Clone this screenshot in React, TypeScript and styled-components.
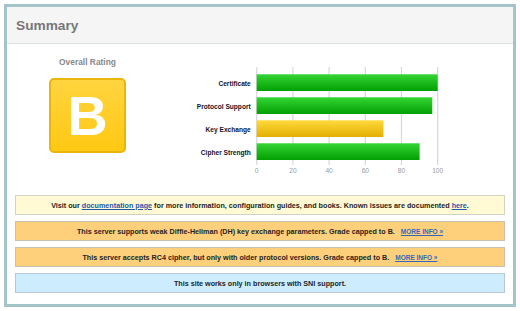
import React from 'react';
import styled, { createGlobalStyle } from 'styled-components';

type Tone = 'info' | 'warning' | 'note';

interface Score {
    label: string;
    value: number;
    color: 'green' | 'yellow';
}

const scores: Score[] = [
    { label: 'Certificate', value: 100, color: 'green' },
    { label: 'Protocol Support', value: 97, color: 'green' },
    { label: 'Key Exchange', value: 70, color: 'yellow' },
    { label: 'Cipher Strength', value: 90, color: 'green' },
];

const GlobalStyle = createGlobalStyle`
    html, body {
        margin: 0;
        background: #fff;
    }
    body {
        padding: 4px;
        font-family: 'Liberation Sans', Arial, sans-serif;
    }
`;

const Frame = styled.div`
    width: 512px;
    box-sizing: border-box;
    border: 3px solid #a5c4c7;
    background: #fff;
`;

const Header = styled.div`
    height: 36px;
    display: flex;
    align-items: center;
    padding-left: 9px;
    background: #f5f5f5;
    border-bottom: 1px solid #d6e4e4;
`;

const Title = styled.h2`
    margin: 0;
    font-size: 13.7px;
    font-weight: bold;
    color: #777;
`;

const Body = styled.div`
    padding: 13px 8px 11px;
`;

const TopRow = styled.div`
    display: flex;
    margin-left: -8px;
`;

const RatingColumn = styled.div`
    width: 161px;
    display: flex;
    flex-direction: column;
    align-items: center;
`;

const RatingLabel = styled.div`
    font-size: 8.4px;
    line-height: 10px;
    font-weight: bold;
    color: #888;
`;

const GradeBox = styled.div`
    margin-top: 11px;
    width: 77px;
    height: 75px;
    box-sizing: border-box;
    border: 2px solid #e9b60c;
    border-radius: 5px;
    background: linear-gradient(#ffd43f, #ffc812);
    display: flex;
    align-items: center;
    justify-content: center;
    color: #fff;
    font-size: 56px;
    line-height: 56px;
    font-weight: bold;
`;

const Notices = styled.div`
    margin-top: 18px;
    display: flex;
    flex-direction: column;
    gap: 6px;
`;

const toneColors: Record<Tone, { bg: string; border: string }> = {
    info: { bg: '#fffad3', border: '#d2d2c4' },
    warning: { bg: '#ffd07c', border: '#c9c2b3' },
    note: { bg: '#cdedff', border: '#b9c9d1' },
};

const Notice = styled.div<{ $tone: Tone }>`
    height: 20px;
    box-sizing: border-box;
    display: flex;
    align-items: center;
    justify-content: center;
    background: ${(p) => toneColors[p.$tone].bg};
    border: 1px solid ${(p) => toneColors[p.$tone].border};
    font-size: 7.2px;
    font-weight: bold;
    color: #1e1e1e;
    white-space: pre;
`;

const Link = styled.a`
    color: #2358ad;
    text-decoration: underline;
`;

const MoreInfo = styled.a`
    margin-left: 6px;
    font-size: 6.5px;
    color: #3568bd;
    text-decoration: underline;
`;

const ScoreChart = () => {
    const x0 = 88.7;
    const unit = 1.81;
    const ticks = [0, 20, 40, 60, 80, 100];

    return (
        <svg
            width='300'
            height='120'
            style={{ fontFamily: "'Liberation Sans', Arial, sans-serif" }}
        >
            <defs>
                <linearGradient id='barGreen' x1='0' y1='0' x2='0' y2='1'>
                    <stop offset='0' stopColor='#34d534' />
                    <stop offset='1' stopColor='#02a002' />
                </linearGradient>
                <linearGradient id='barYellow' x1='0' y1='0' x2='0' y2='1'>
                    <stop offset='0' stopColor='#ffd93b' />
                    <stop offset='1' stopColor='#e2af02' />
                </linearGradient>
            </defs>
            {ticks.map((t) => (
                <g key={t}>
                    <line
                        x1={x0 + t * unit}
                        x2={x0 + t * unit}
                        y1='10'
                        y2='108'
                        stroke='#dadada'
                        strokeWidth='1.3'
                    />
                    <text
                        x={x0 + t * unit}
                        y='116.3'
                        fontSize='6.6'
                        fill='#9a9a9a'
                        textAnchor='middle'
                    >
                        {t}
                    </text>
                </g>
            ))}
            {scores.map((s, i) => (
                <g key={s.label}>
                    <text
                        x='82.7'
                        y={28.6 + i * 23}
                        fontSize='6.6'
                        fontWeight='bold'
                        fill='#12122a'
                        textAnchor='end'
                    >
                        {s.label}
                    </text>
                    <rect
                        x={x0}
                        y={17.3 + i * 23}
                        width={s.value * unit}
                        height='16.7'
                        fill={s.color === 'green' ? 'url(#barGreen)' : 'url(#barYellow)'}
                    />
                </g>
            ))}
        </svg>
    );
};

const App = () => {
    return (
        <>
            <GlobalStyle />
            <Frame>
                <Header>
                    <Title>Summary</Title>
                </Header>
                <Body>
                    <TopRow>
                        <RatingColumn>
                            <RatingLabel>Overall Rating</RatingLabel>
                            <GradeBox>B</GradeBox>
                        </RatingColumn>
                        <ScoreChart />
                    </TopRow>
                    <Notices>
                        <Notice $tone='info'>
                            Visit our <Link href='#'>documentation page</Link> for more information, configuration guides, and books. Known issues are documented <Link href='#'>here</Link>.
                        </Notice>
                        <Notice $tone='warning'>
                            This server supports weak Diffie-Hellman (DH) key exchange parameters. Grade capped to B.
                            <MoreInfo href='#'>MORE INFO »</MoreInfo>
                        </Notice>
                        <Notice $tone='warning'>
                            This server accepts RC4 cipher, but only with older protocol versions. Grade capped to B.
                            <MoreInfo href='#'>MORE INFO »</MoreInfo>
                        </Notice>
                        <Notice $tone='note'>
                            This site works only in browsers with SNI support.
                        </Notice>
                    </Notices>
                </Body>
            </Frame>
        </>
    );
};

export default App;
